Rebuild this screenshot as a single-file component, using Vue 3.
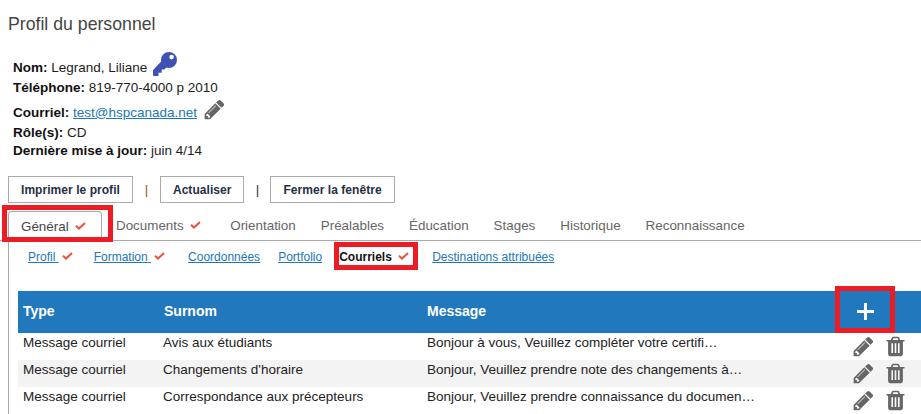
<script setup>
const tabs = [
  { label: "Général", check: true, active: true },
  { label: "Documents", check: true },
  { label: "Orientation" },
  { label: "Préalables" },
  { label: "Éducation" },
  { label: "Stages" },
  { label: "Historique" },
  { label: "Reconnaissance" },
]

const subTabs = [
  { label: "Profil", check: true },
  { label: "Formation", check: true },
  { label: "Coordonnées" },
  { label: "Portfolio" },
  { label: "Courriels", check: true, active: true },
  { label: "Destinations attribuées" },
]

const rows = [
  { type: "Message courriel", name: "Avis aux étudiants", message: "Bonjour à vous, Veuillez compléter votre certifi…" },
  { type: "Message courriel", name: "Changements d'horaire", message: "Bonjour, Veuillez prendre note des changements à…" },
  { type: "Message courriel", name: "Correspondance aux précepteurs", message: "Bonjour, Veuillez prendre connaissance du documen…" },
]

const pencil = "M491 1536l91-91-235-235-91 91v107h128v128h107zm523-928q0-22-22-22-10 0-17 7l-542 542q-7 7-7 17 0 22 22 22 10 0 17-7l542-542q7-7 7-17zm-54-192l416 416-832 832h-416v-416zm683 96q0 53-37 90l-166 166-416-416 165-166q36-38 91-38 53 0 91 38l235 234q37 39 37 91z"
const trash = "M704 1376v-704q0-14-9-23t-23-9h-64q-14 0-23 9t-9 23v704q0 14 9 23t23 9h64q14 0 23-9t9-23zm256 0v-704q0-14-9-23t-23-9h-64q-14 0-23 9t-9 23v704q0 14 9 23t23 9h64q14 0 23-9t9-23zm256 0v-704q0-14-9-23t-23-9h-64q-14 0-23 9t-9 23v704q0 14 9 23t23 9h64q14 0 23-9t9-23zm-544-992h448l-48-117q-7-9-17-11h-317q-10 2-17 11zm928 32v64q0 14-9 23t-23 9h-96v948q0 83-47 143.5t-113 60.5h-832q-66 0-113-58.5t-47-141.5v-952h-96q-14 0-23-9t-9-23v-64q0-14 9-23t23-9h309l70-167q15-37 54-63t79-26h320q40 0 79 26t54 63l70 167h309q14 0 23 9t9 23z"
</script>

<template>
  <main class="page">
    <h1>Profil du personnel</h1>

    <section class="info">
      <div class="line l1">
        <span><b>Nom:</b> Legrand, Liliane</span>
        <svg class="key" viewBox="0 0 24 24">
          <path fill-rule="evenodd" d="M16 0a8 8 0 1 1 0 16 8 8 0 0 1 0-16zM18.6 2.8a2.3 2.3 0 1 0 0 4.6 2.3 2.3 0 0 0 0-4.6z" />
          <path d="M9.5 8 .6 17.5a2 2 0 0 0-.6 1.4V23a1 1 0 0 0 1 1h4.5v-3.2h3.2v-3.2h2.6L15 14z" />
        </svg>
      </div>
      <div class="line l2"><span><b>Téléphone:</b> 819-770-4000 p 2010</span></div>
      <div class="line l3">
        <span><b>Courriel:</b> <a href="#">test@hspcanada.net</a></span>
        <svg class="edit" viewBox="0 0 1792 1792"><path :d="pencil" /></svg>
      </div>
      <div class="line l4"><span><b>Rôle(s):</b> CD</span></div>
      <div class="line l5"><span><b>Dernière mise à jour:</b> juin 4/14</span></div>
    </section>

    <div class="actions">
      <button>Imprimer le profil</button>
      <span class="sep">|</span>
      <button>Actualiser</button>
      <span class="sep">|</span>
      <button>Fermer la fenêtre</button>
    </div>

    <nav class="tabs">
      <div v-for="t in tabs" :key="t.label" class="tab" :class="{ active: t.active }">
        {{ t.label }}
        <svg v-if="t.check" class="check" viewBox="0 0 11 8"><path d="M1 3.8 4 6.6 10 1" /></svg>
        <span v-if="t.active" class="mark mark-tab"></span>
      </div>
    </nav>

    <div class="pane">
      <nav class="subtabs">
        <div v-for="s in subTabs" :key="s.label" class="subtab" :class="{ active: s.active }">
          <a href="#">{{ s.label }}<template v-if="s.check">&nbsp;</template></a>
          <svg v-if="s.check" class="check small" viewBox="0 0 11 8"><path d="M1 3.8 4 6.6 10 1" /></svg>
          <span v-if="s.active" class="mark mark-sub"></span>
        </div>
      </nav>

      <table>
        <thead>
          <tr>
            <th class="c1">Type</th>
            <th class="c2">Surnom</th>
            <th class="c3">Message</th>
            <th class="c4">
              <span class="add">
                <svg class="plus" viewBox="0 0 17 17"><path d="M7 0h3v7h7v3h-7v7H7v-7H0V7h7z" /></svg>
                <span class="mark mark-add"></span>
              </span>
            </th>
          </tr>
        </thead>
        <tbody>
          <tr v-for="r in rows" :key="r.name">
            <td>{{ r.type }}</td>
            <td>{{ r.name }}</td>
            <td>{{ r.message }}</td>
            <td class="tools">
              <svg class="tool pen" viewBox="0 0 1792 1792"><path :d="pencil" /></svg>
              <svg class="tool bin" viewBox="0 0 1792 1792"><path :d="trash" /></svg>
            </td>
          </tr>
        </tbody>
      </table>
    </div>
  </main>
</template>

<style>
html, body {
  margin: 0;
  overflow: hidden;
  background: #fff;
}
</style>

<style scoped>
.page {
  height: 414px;
  overflow: hidden;
  font-family: "Liberation Sans", Arial, sans-serif;
  font-size: 13.5px;
  color: #222;
  display: flex;
  flex-direction: column;
}
h1 {
  margin: 13px 0 0 8px;
  font-size: 17.7px;
  line-height: 23px;
  font-weight: normal;
  color: #444;
}
.info {
  margin: 21px 0 0 13px;
}
.line {
  display: flex;
  align-items: center;
  height: 20px;
}
.line b {
  color: #111;
}
.l3 { margin-top: 5px; }
.l5 { height: 16px; }
a {
  color: #2077bb;
  text-decoration: underline;
}
.key {
  width: 24px;
  height: 24px;
  margin: -6px 0 0 6px;
  fill: #3f51b5;
}
.edit {
  width: 23px;
  height: 23px;
  margin: -6px 0 0 6px;
  fill: #666;
}
.actions {
  display: flex;
  align-items: center;
  margin: 18px 0 0 8px;
}
button {
  height: 27px;
  padding: 0 12px;
  background: #fff;
  border: 1px solid #aaa;
  font-family: inherit;
  font-size: 12px;
  font-weight: bold;
  letter-spacing: 0.05px;
  color: #1f3044;
}
.sep {
  width: 27px;
  text-align: center;
  color: #9a5a10;
}
.sep:nth-child(4) {
  width: 26px;
  color: #1f3044;
}
.tabs {
  display: flex;
  margin-top: 8px;
  padding-left: 8px;
  height: 29px;
  border-bottom: 1px solid #aaa;
  flex: none;
  font-size: 13.4px;
}
.tab {
  position: relative;
  display: flex;
  align-items: center;
  gap: 6px;
  height: 29px;
  padding: 0 12px;
  margin-right: 1px;
  color: #666;
  white-space: nowrap;
  box-sizing: border-box;
}
.tab.active {
  color: #444;
  background: #fff;
  height: 30px;
  border: 1px solid #aaa;
  border-bottom: none;
  border-radius: 4px 4px 0 0;
  width: 94px;
  margin-right: 2px;
}
.tab:nth-child(2) {
  padding-right: 16.5px;
}
.check {
  width: 11px;
  height: 8px;
  margin-top: -2px;
  flex: none;
  fill: none;
  stroke: #e9533f;
  stroke-width: 2;
}
.mark {
  position: absolute;
  border: 5px solid #ed1c24;
  box-sizing: border-box;
  pointer-events: none;
}
.mark-tab {
  left: -7px;
  top: -7px;
  width: 111px;
  height: 37px;
}
.pane {
  flex: 1;
  margin-left: 8px;
  border-left: 1px solid #aaa;
}
.subtabs {
  display: flex;
  height: 50px;
  padding-left: 19px;
  font-size: 12px;
  align-items: flex-start;
}
.subtab {
  position: relative;
  display: flex;
  align-items: center;
  height: 32px;
  margin-right: 21px;
  white-space: nowrap;
}
.subtab .small {
  margin-left: 3px;
}
.subtab:nth-child(1) { margin-right: 21px; }
.subtab:nth-child(2) { margin-right: 23px; }
.subtab:nth-child(3) { margin-right: 18px; }
.subtab:nth-child(4) { margin-right: 17px; }
.subtab:nth-child(5) { margin-right: 23px; }
.subtab.active a {
  color: #111;
  font-weight: bold;
  text-decoration: none;
}
.mark-sub {
  left: -5px;
  top: 1px;
  width: 84px;
  height: 28px;
}
table {
  margin-left: 9px;
  width: 903px;
  border-collapse: collapse;
  table-layout: fixed;
}
th {
  box-sizing: border-box;
  height: 42px;
  padding: 0 5px 2px;
  background: #2278bd;
  color: #fff;
  font-size: 14px;
  text-align: left;
}
th.c2 { padding-left: 6px; }
td {
  height: 27px;
  padding: 1px 5px 0;
  box-sizing: border-box;
  line-height: 17px;
  color: #222;
  vertical-align: top;
  white-space: nowrap;
  overflow: hidden;
}
tbody tr:nth-child(2) td {
  background: #f3f3f3;
}
.c1 { width: 140px; }
.c2 { width: 264px; }
.c3 { width: 413px; }
th.c4 { padding: 0; }
.add {
  position: relative;
  display: block;
  width: 60px;
  height: 42px;
}
.plus {
  position: absolute;
  left: 22px;
  top: 12px;
  width: 17px;
  height: 17px;
  fill: #fff;
}
.mark-add {
  left: 0;
  top: -5px;
  width: 60px;
  height: 47px;
}
td.tools {
  padding: 2px 0 0;
  line-height: 0;
  overflow: visible;
}
.tool {
  display: inline-block;
  vertical-align: top;
  fill: #666;
}
.pen {
  width: 23px;
  height: 23px;
  margin-left: 17px;
}
.bin {
  width: 23px;
  height: 23px;
  margin-left: 9px;
}
</style>
